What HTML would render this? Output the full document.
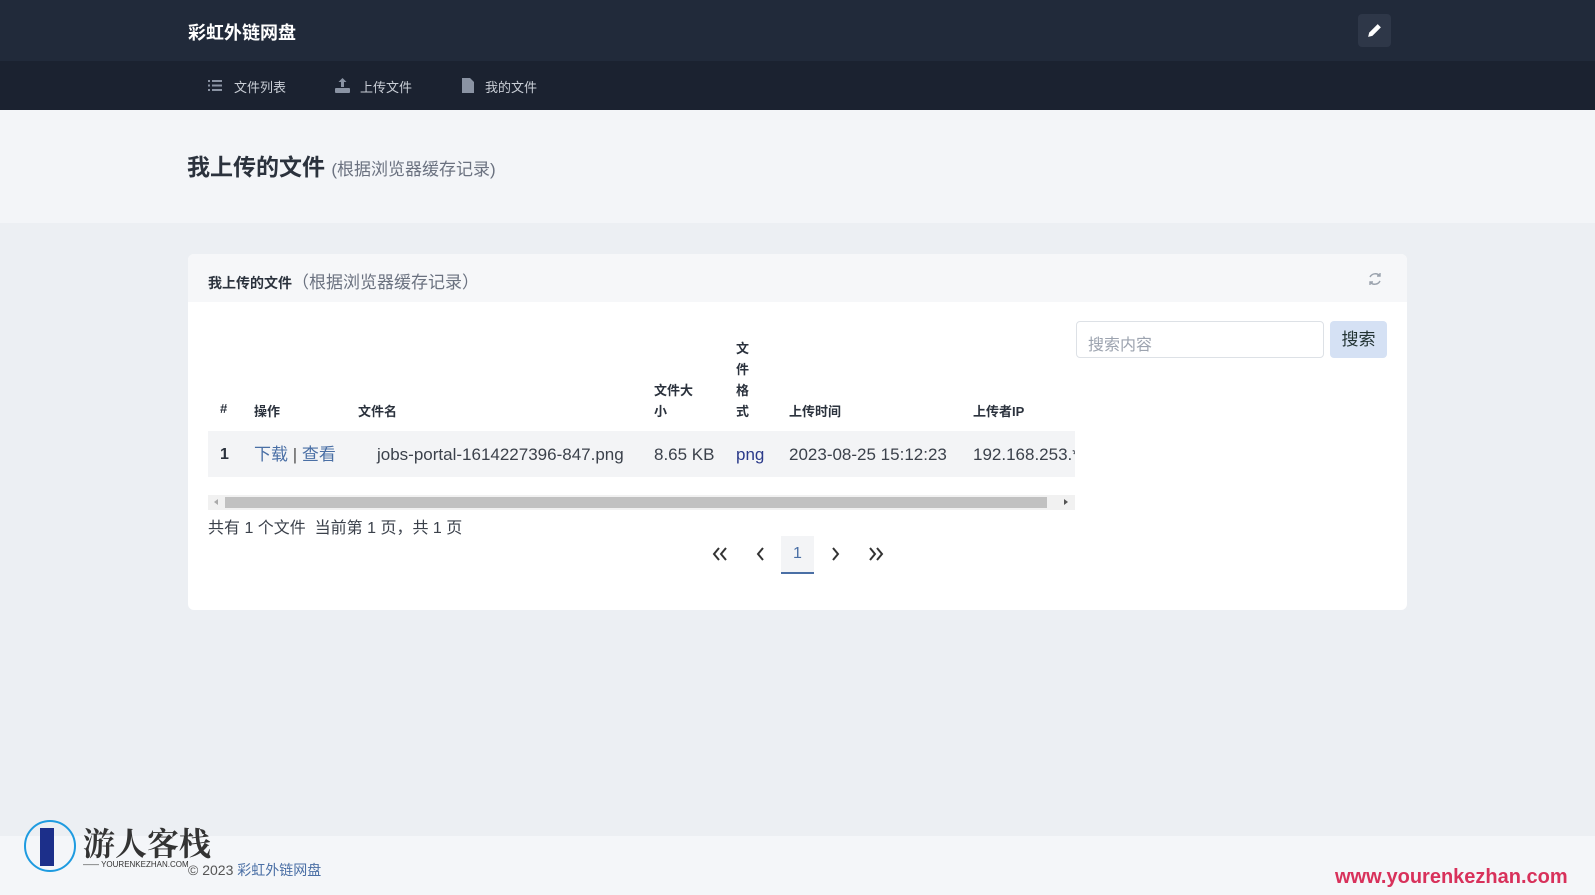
<!DOCTYPE html>
<html><head><meta charset="utf-8"><style>
*{box-sizing:border-box;margin:0;padding:0}
body{width:1595px;height:895px;overflow:hidden;background:#eceff3;font-family:"Liberation Sans","Noto Sans CJK SC",sans-serif;color:#333;position:relative}
.abs{position:absolute;white-space:nowrap}
.top{position:absolute;left:0;top:0;width:1595px;height:61px;background:#212a3a}
.nav{position:absolute;left:0;top:61px;width:1595px;height:49px;background:#1b2230}
.hdr{position:absolute;left:0;top:110px;width:1595px;height:113px;background:#f3f5f8}
.card{position:absolute;left:188px;top:254px;width:1219px;height:356px;background:#fff;border-radius:6px;overflow:hidden}
.ch{height:48px;background:#f6f7f9}
.foot{position:absolute;left:0;top:836px;width:1595px;height:59px;background:#f4f6f9}
.row{font-size:16px;color:#3b414b;top:445px;line-height:20px}
</style></head><body>
<div class="top"></div>
<div class="abs" style="left:188px;top:19px;font-size:18px;font-weight:bold;color:#fff">彩虹外链网盘</div>
<div class="abs" style="left:1358px;top:14px;width:33px;height:33px;background:#2e3748;border-radius:4px"></div>
<svg class="abs" style="left:1366px;top:22px" width="17" height="17" viewBox="0 0 16 16"><path d="M2 14l1-4 8-8 3 3-8 8z" fill="#fff"/></svg>
<div class="nav"></div>
<svg class="abs" style="left:208px;top:79px" width="14" height="13" viewBox="0 0 14 13" fill="#8a93a3"><rect x="0" y="1" width="2" height="2"/><rect x="4" y="1" width="10" height="2"/><rect x="0" y="5.5" width="2" height="2"/><rect x="4" y="5.5" width="10" height="2"/><rect x="0" y="10" width="2" height="2"/><rect x="4" y="10" width="10" height="2"/></svg>
<div class="abs" style="left:234px;top:77px;font-size:13px;color:#c9ced6">文件列表</div>
<svg class="abs" style="left:335px;top:78px" width="15" height="15" viewBox="0 0 15 15" fill="#8a93a3"><path d="M7.5 0l4 4h-2.5v5h-3v-5h-2.5z"/><rect x="0" y="10" width="15" height="5" rx="1"/></svg>
<div class="abs" style="left:360px;top:77px;font-size:13px;color:#c9ced6">上传文件</div>
<svg class="abs" style="left:462px;top:78px" width="12" height="15" viewBox="0 0 12 15" fill="#8a93a3"><path d="M0 0h8l4 4v11h-12z"/></svg>
<div class="abs" style="left:485px;top:77px;font-size:13px;color:#c9ced6">我的文件</div>
<div class="hdr"></div>
<div class="abs" style="left:187px;top:148px;font-size:23px;font-weight:bold;color:#2b323d">我上传的文件 <span style="font-size:17px;font-weight:normal;color:#6b7280">(根据浏览器缓存记录)</span></div>
<div class="card"><div class="ch"></div></div>
<div class="abs" style="left:208px;top:268px;font-size:14px;font-weight:bold;color:#2b323d">我上传的文件<span style="font-size:17px;font-weight:normal;color:#6b7280">（根据浏览器缓存记录）</span></div>
<svg class="abs" style="left:1367px;top:271px" width="16" height="16" viewBox="0 0 16 16" fill="none" stroke="#9aa2ad" stroke-width="1.4"><path d="M13 5a6 6 0 0 0-10 1M3 11a6 6 0 0 0 10-1"/><path d="M13 2v3h-3M3 14v-3h3"/></svg>
<div class="abs" style="left:1076px;top:321px;width:248px;height:37px;border:1px solid #dde1e6;border-radius:4px;background:#fff"></div>
<div class="abs" style="left:1088px;top:331px;font-size:16px;color:#9ca3af">搜索内容</div>
<div class="abs" style="left:1330px;top:321px;width:57px;height:37px;background:#d5e1f4;border-radius:4px;font-size:17px;color:#233;text-align:center;line-height:37px">搜索</div>
<div class="abs" style="left:220px;top:401px;font-size:13px;font-weight:bold;color:#2b323d">#</div>
<div class="abs" style="left:254px;top:401px;font-size:13px;font-weight:bold;color:#2b323d">操作</div>
<div class="abs" style="left:358px;top:401px;font-size:13px;font-weight:bold;color:#2b323d">文件名</div>
<div class="abs" style="left:654px;top:380px;font-size:13px;font-weight:bold;color:#2b323d;line-height:21px">文件大<br>小</div>
<div class="abs" style="left:736px;top:338px;font-size:13px;font-weight:bold;color:#2b323d;line-height:21px">文<br>件<br>格<br>式</div>
<div class="abs" style="left:789px;top:401px;font-size:13px;font-weight:bold;color:#2b323d">上传时间</div>
<div class="abs" style="left:973px;top:401px;font-size:13px;font-weight:bold;color:#2b323d">上传者IP</div>
<div class="abs" style="left:208px;top:431px;width:867px;height:46px;background:#f3f4f6"></div>
<div class="abs row" style="left:220px;font-weight:bold;color:#2b323d">1</div>
<div class="abs row" style="left:254px;color:#4a6fa5;font-size:17px">下载 <span style="color:#555">|</span> 查看</div>
<div class="abs row" style="left:377px;font-size:17px">jobs-portal-1614227396-847.png</div>
<div class="abs row" style="left:654px;font-size:17px">8.65 KB</div>
<div class="abs row" style="left:736px;color:#2b3a8a;font-size:17px">png</div>
<div class="abs row" style="left:789px;font-size:17px">2023-08-25 15:12:23</div>
<div class="abs row" style="left:973px;width:102px;overflow:hidden;font-size:17px">192.168.253.*</div>
<div class="abs" style="left:208px;top:495px;width:867px;height:15px;background:#f1f1f1"></div>
<div class="abs" style="left:225px;top:497px;width:822px;height:11px;background:#c1c1c1"></div>
<div class="abs" style="left:1064px;top:499px;width:0;height:0;border-left:4px solid #555;border-top:3.5px solid transparent;border-bottom:3.5px solid transparent"></div>
<div class="abs" style="left:214px;top:499px;width:0;height:0;border-right:4px solid #aaa;border-top:3.5px solid transparent;border-bottom:3.5px solid transparent"></div>
<div class="abs" style="left:208px;top:514px;font-size:16px;color:#3b414b">共有 1 个文件&nbsp; 当前第 1 页，共 1 页</div>
<div class="abs" style="left:781px;top:536px;width:33px;height:38px;background:#f3f4f6;border-bottom:2px solid #4a6fa5"></div>
<svg class="abs" style="left:712px;top:547px" width="16" height="14" viewBox="0 0 16 14" fill="none" stroke="#333" stroke-width="2"><path d="M7 1L2 7l5 6M14 1L9 7l5 6"/></svg>
<svg class="abs" style="left:756px;top:547px" width="10" height="14" viewBox="0 0 10 14" fill="none" stroke="#333" stroke-width="2"><path d="M7 1L2 7l5 6"/></svg>
<div class="abs" style="left:793px;top:545px;font-size:16px;color:#4a6fa5">1</div>
<svg class="abs" style="left:830px;top:547px" width="10" height="14" viewBox="0 0 10 14" fill="none" stroke="#333" stroke-width="2"><path d="M3 1l5 6-5 6"/></svg>
<svg class="abs" style="left:868px;top:547px" width="16" height="14" viewBox="0 0 16 14" fill="none" stroke="#333" stroke-width="2"><path d="M2 1l5 6-5 6M9 1l5 6-5 6"/></svg>
<div class="foot"></div>
<div class="abs" style="left:188px;top:860px;font-size:14px;color:#555">© 2023 <span style="color:#4a6fa5">彩虹外链网盘</span></div>
<div class="abs" style="left:24px;top:820px;width:52px;height:52px;border:2px solid #1e9be0;border-radius:50%"></div>
<div class="abs" style="left:40px;top:828px;width:14px;height:38px;background:#1c2f8a"></div>
<div class="abs" style="left:83px;top:819px;font-size:32px;font-weight:bold;color:#333;font-family:'Noto Serif CJK SC',serif">游人客栈</div>
<div class="abs" style="left:83px;top:860px;font-size:8px;color:#333">—— YOURENKEZHAN.COM</div>
<div class="abs" style="left:1335px;top:866px;font-size:20px;font-weight:bold;color:#d8315b">www.yourenkezhan.com</div>
</body></html>
